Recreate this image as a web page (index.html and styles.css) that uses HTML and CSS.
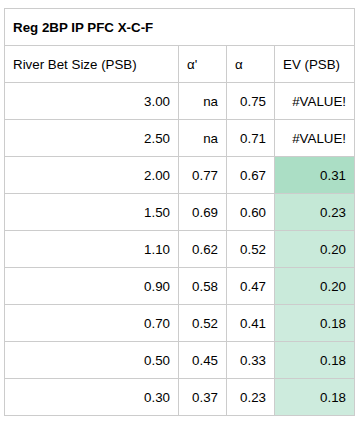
FILE: index.html
```html
<!DOCTYPE html>
<html>
<head>
<meta charset="utf-8">
<link rel="stylesheet" href="styles.css">
</head>
<body>
<table class="sheet">
  <colgroup>
    <col class="c1"><col class="c2"><col class="c3"><col class="c4">
  </colgroup>
  <tr><td class="title" colspan="4">Reg 2BP IP PFC X-C-F</td></tr>
  <tr class="head"><td>River Bet Size (PSB)</td><td>α'</td><td>α</td><td>EV (PSB)</td></tr>
  <tr><td>3.00</td><td>na</td><td>0.75</td><td>#VALUE!</td></tr>
  <tr><td>2.50</td><td>na</td><td>0.71</td><td>#VALUE!</td></tr>
  <tr><td>2.00</td><td>0.77</td><td>0.67</td><td class="g31">0.31</td></tr>
  <tr><td>1.50</td><td>0.69</td><td>0.60</td><td class="g23">0.23</td></tr>
  <tr><td>1.10</td><td>0.62</td><td>0.52</td><td class="g20">0.20</td></tr>
  <tr><td>0.90</td><td>0.58</td><td>0.47</td><td class="g20">0.20</td></tr>
  <tr><td>0.70</td><td>0.52</td><td>0.41</td><td class="g18">0.18</td></tr>
  <tr><td>0.50</td><td>0.45</td><td>0.33</td><td class="g18">0.18</td></tr>
  <tr><td>0.30</td><td>0.37</td><td>0.23</td><td class="g18">0.18</td></tr>
</table>
</body>
</html>
```
FILE: styles.css
```css
html, body {
  margin: 0;
  background: #fff;
}
body {
  padding: 8px 0 0 4px;
  font-family: "Liberation Sans", Arial, sans-serif;
  font-size: 13.33px;
  color: #000;
}
.sheet {
  border-collapse: collapse;
  table-layout: fixed;
  width: 351px;
}
.c1 { width: 174px; }
.c2 { width: 48px; }
.c3 { width: 48px; }
.c4 { width: 80px; }
.sheet tr { height: 37px; }
.sheet td {
  border: 1px solid #cccccc;
  padding: 0 8px;
  text-align: right;
  white-space: nowrap;
  overflow: hidden;
}
.sheet td.title {
  text-align: left;
  font-weight: bold;
}
.sheet tr.head td {
  text-align: left;
}
.g31 { background: #abdec5; }
.g23 { background: #c4e8d6; }
.g20 { background: #c9eada; }
.g18 { background: #cdebdd; }
```
